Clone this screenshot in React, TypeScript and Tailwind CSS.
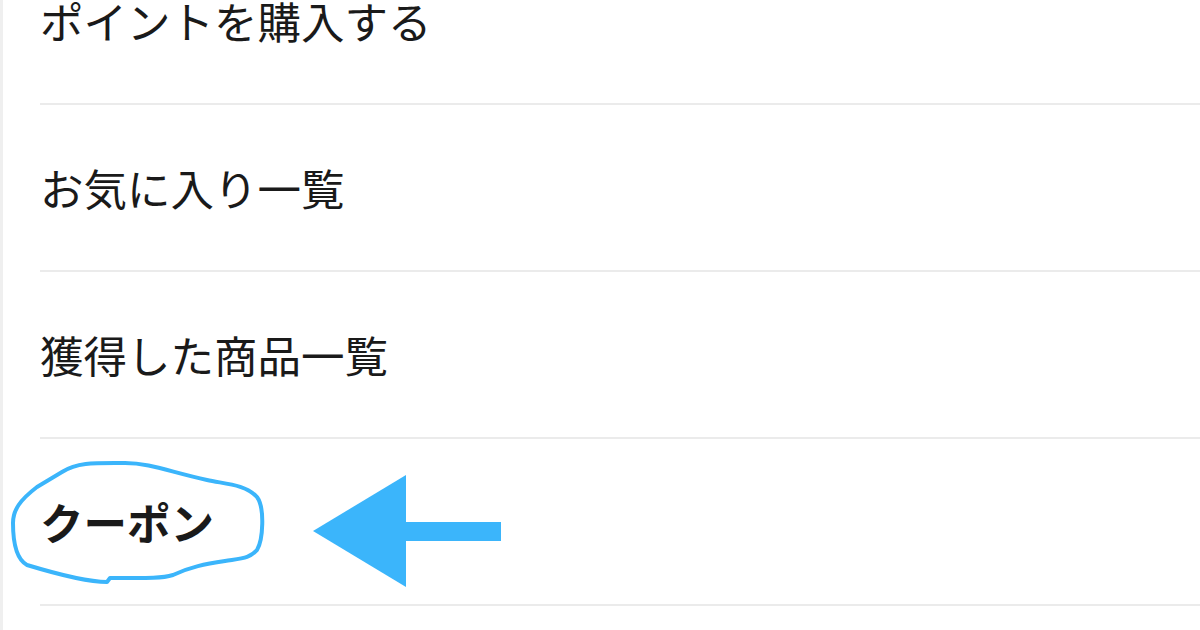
const items = [
  { label: "ポイントを購入する", bold: false },
  { label: "お気に入り一覧", bold: false },
  { label: "獲得した商品一覧", bold: false },
  { label: "クーポン", bold: true },
];

export default function App() {
  return (
    <div
      className="relative w-[1200px] h-[630px] overflow-hidden bg-white border-l-[3px] border-[#efefef]"
      style={{ fontFamily: '"Noto Sans CJK JP", "Noto Sans", sans-serif' }}
    >
      <ul className="-mt-[62px] pl-[37px]">
        {items.map((item) => (
          <li
            key={item.label}
            className="h-[167px] flex items-center border-b-2 border-[#ebebeb]"
          >
            <span
              className={`text-[43.5px] leading-none text-[#1a1a1a] ${item.bold ? "font-bold" : "font-normal"}`}
            >
              {item.label}
            </span>
          </li>
        ))}
      </ul>

      {/* annotation: hand-drawn circle + arrow */}
      <svg className="absolute -left-[3px] top-0" width="1200" height="630" viewBox="0 0 1200 630">
        <path
          d="M62 472 C78 462 95 463 125 463 C150 463 170 472 207 480 C225 484 245 484 257 497 C265 508 263 540 257 550 C250 558 243 558 225 561 C205 564 190 567 173 575 C160 579 140 578 110 578 L107 582 C90 582 60 575 27 565 C18 560 13 545 13 523 C13 510 20 500 37 487 Z"
          fill="none"
          stroke="#3bb5fb"
          strokeWidth="4"
          strokeLinejoin="round"
        />
        <polygon points="313,531 406,475 406,587" fill="#3bb5fb" />
        <rect x="405" y="522" width="96" height="19" fill="#3bb5fb" />
      </svg>
    </div>
  );
}
